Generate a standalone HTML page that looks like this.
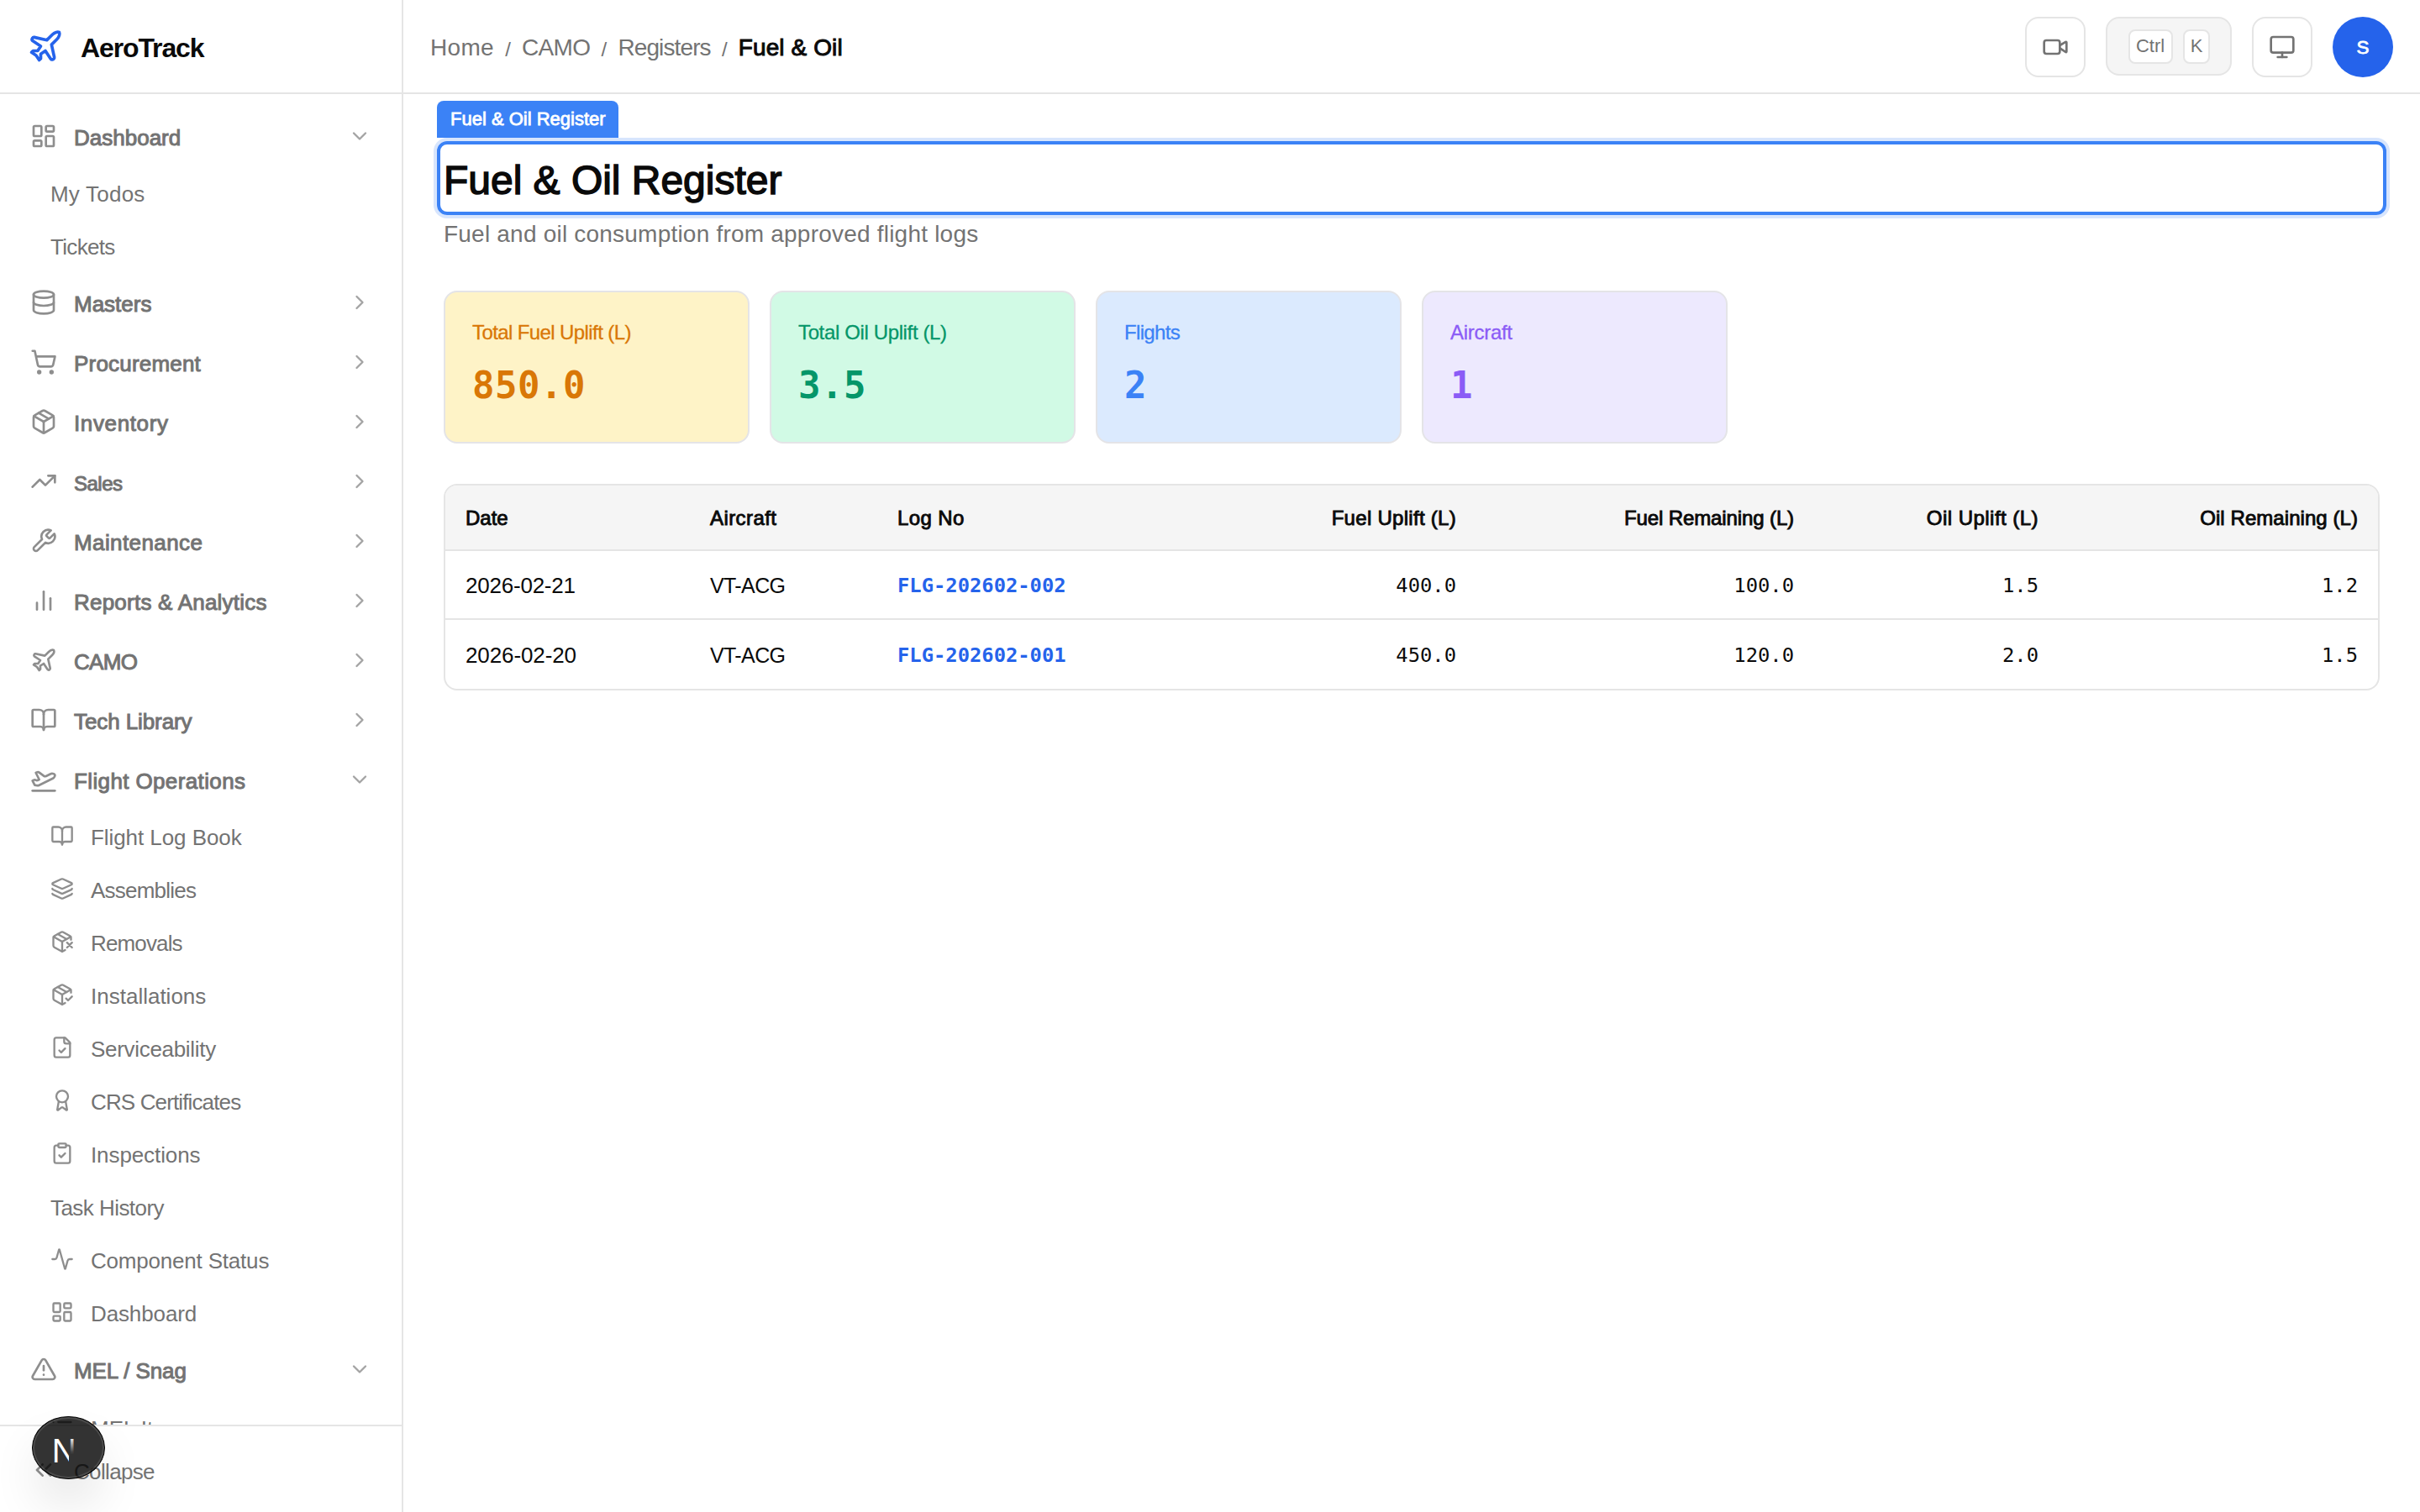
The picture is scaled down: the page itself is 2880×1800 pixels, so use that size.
<!DOCTYPE html>
<html lang="en"><head><meta charset="utf-8"><title>AeroTrack - Fuel &amp; Oil Register</title>
<style>
*{box-sizing:border-box;margin:0;padding:0}
html{zoom:2;background:#fff;overflow:hidden}
@media (max-width:1800px){html{zoom:1}}
body{width:1440px;height:900px;overflow:hidden;position:relative;background:#fff;color:#0a0a0a;font-family:"Liberation Sans",sans-serif;font-size:14px}
.ic{display:block;flex:none}
.tx{display:inline-block;white-space:nowrap}
.mono{font-family:"DejaVu Sans Mono","Liberation Mono",monospace}
.sb6{-webkit-text-stroke-width:.3px}
/* sidebar */
#sb{position:absolute;left:0;top:0;width:240px;height:900px;border-right:1px solid #e5e5e5;background:#fff}
#brand{position:absolute;left:0;top:0;width:239px;height:56px;border-bottom:1px solid #e5e5e5}
#brand .ic{position:absolute;left:16px;top:16.5px;color:#2563eb}
#brand .bt{position:absolute;left:48px;top:17.5px;font-size:16px;line-height:22px;font-weight:700;color:#0a0a0a;white-space:nowrap}
#nav{position:absolute;left:0;top:56px;width:239px;height:792px;padding:8px;overflow:hidden}
.ni{display:flex;align-items:center;color:#737373;font-size:13px;line-height:19.5px;white-space:nowrap;margin-bottom:2px}
.ni .lb{padding-top:3.1px}
.ni.top{height:33.5px;padding:0 10px;gap:10px;-webkit-text-stroke-width:.5px}
.ni.top .lb{flex:1}
.ni .ic{opacity:.8}
.ni .chev{color:#a3a3a3;opacity:1}
.subs{margin-left:12px;padding:.25px 0}
.subs.last{padding-top:1.5px}
.ni.sub{height:29.5px;padding:0 10px;gap:10px}
.ni.sub .lb{padding-top:2.4px}
#sbfoot{position:absolute;left:0;top:848px;width:239px;height:52px;border-top:1px solid #e5e5e5;background:#fff}
#sbfoot .ni{position:absolute;left:8px;top:9px;height:34px;padding:0 10px;gap:10px}
#sbfoot .tx{padding-top:2.4px}
/* header */
#hd{position:absolute;left:240px;top:0;width:1200px;height:56px;border-bottom:1px solid #e5e5e5;background:#fff}
#bc{position:absolute;left:16px;top:1px;height:55px;display:flex;align-items:center;font-size:14px;color:#737373;white-space:nowrap}
#bc .sl{font-size:12px;margin:0 6px;color:#737373;display:block;width:4.5px;text-align:center;position:relative;top:.8px}
#bc .cur{color:#0a0a0a;font-weight:400;-webkit-text-stroke-width:.5px}
.hb{position:absolute;top:10px;width:36px;height:36px;border:1px solid #e5e5e5;border-radius:8px;background:#fff;color:#737373;display:flex;align-items:center;justify-content:center}
#kb{position:absolute;top:10px;left:1013px;width:75px;height:35px;border:1px solid #e5e5e5;border-radius:8px;background:#f5f5f5}
#kb kbd{position:absolute;top:6.25px;height:20.5px;border:1px solid #e5e5e5;border-radius:4px;background:#fff;color:#737373;font:11px/17.9px "Liberation Sans",sans-serif;text-align:center}
#av{position:absolute;top:10px;left:1148px;width:36px;height:36px;border-radius:50%;background:#2563eb;color:#fff;font-weight:400;-webkit-text-stroke-width:.4px;font-size:11.2px;line-height:37.4px;text-align:center}
/* main */
#tab{position:absolute;left:260px;top:60px;width:108px;height:22px;background:#3b82f6;border-radius:4px 4px 0 0;color:#fff;font-size:11px;line-height:22.2px;padding-left:8px;white-space:nowrap;-webkit-text-stroke-width:.4px}
#hl{position:absolute;left:260px;top:84px;width:1160px;height:44px;border:2px solid #3b82f6;border-radius:6px;box-shadow:0 0 0 2px #d7e5fd}
#h1{position:absolute;left:264px;top:89.7px;font-size:24px;line-height:36px;font-weight:400;color:#0a0a0a;white-space:nowrap;-webkit-text-stroke-width:.75px}
#subt{position:absolute;left:264px;top:129.35px;font-size:14px;line-height:20px;color:#737373;white-space:nowrap}
.card{position:absolute;top:173px;width:182px;height:91px;border:1px solid #e4e4e7;border-radius:8px}
.card .cl{position:absolute;left:16px;top:16px;font-size:12px;line-height:16px;white-space:nowrap;-webkit-text-stroke-width:.15px}
.card .cv{position:absolute;left:16px;top:39.3px;font-size:22px;line-height:32px;font-weight:700;white-space:nowrap}
#tb{position:absolute;left:264px;top:288px;width:1152px;height:123px;border:1px solid #e5e5e5;border-radius:8px;overflow:hidden;background:#fff}
#tb table{width:1150px;table-layout:fixed;border-collapse:separate;border-spacing:0}
#tb th,#tb td{padding:0 12px;text-align:left;vertical-align:middle;white-space:nowrap;font-weight:400;overflow:visible}
#tb th{height:39px;background:#f5f5f5;border-bottom:1px solid #e5e5e5;font-size:12px;line-height:18px;-webkit-text-stroke-width:.45px}
#tb td{font-size:13px;line-height:19.5px}
#tb td.mono{font-size:11.9px}
#tb .r1 td{height:41px;border-bottom:1px solid #e5e5e5}
#tb .r2 td{height:41px}
#tb .num{text-align:right}
#tb td.lk{color:#2563eb;font-weight:700}
#tb th .tx{position:relative;top:.5px}
#tb .r1 .tx{position:relative;top:.5px}
#tb .r2 .tx{position:relative;top:.8px}
#nx{position:absolute;left:19.1px;top:842.8px;width:43.6px;height:37.9px;border-radius:50%;background:rgba(0,0,0,.8);border:.8px solid #000;box-shadow:inset 0 0 0 1px rgba(255,255,255,.12),0 16px 32px -8px rgba(0,0,0,.24);color:#fff;font-size:20px;line-height:20px;overflow:hidden}
#nx b{position:absolute;left:11.3px;top:10.4px;font-weight:400;display:block}
#nx i{position:absolute;left:21.5px;top:12px;width:4px;height:17px;background:linear-gradient(to bottom,rgba(51,51,51,0) 0,rgba(51,51,51,.9) 50%,#333 60%);display:block}

</style></head>
<body>
<div id="sb">
 <div id="brand"><svg class="ic " width="22" height="22" viewBox="0 0 24 24" fill="none" stroke="currentColor" stroke-width="2" stroke-linecap="round" stroke-linejoin="round"><path d="M17.8 19.2 16 11l3.5-3.5C21 6 21.5 4 21 3c-1-.5-3 0-4.5 1.5L13 8 4.8 6.200c-.5-.1-.9.1-1.1.5l-.3.5c-.2.5-.1 1 .3 1.300L9 12l-2 3H4l-1 1 3 2 2 3 1-1v-3l3-2 3.500 5.300c.3.4.8.5 1.300.3l.5-.2c.4-.3.6-.7.5-1.200z"/></svg><div class="bt"><span class="tx" id="t_brand" style="letter-spacing:-0.561px">AeroTrack</span></div></div>
 <div id="nav">
<div class="ni top"><svg class="ic " width="16" height="16" viewBox="0 0 24 24" fill="none" stroke="currentColor" stroke-width="2" stroke-linecap="round" stroke-linejoin="round"><rect width="7" height="9" x="3" y="3" rx="1"/><rect width="7" height="5" x="14" y="3" rx="1"/><rect width="7" height="9" x="14" y="12" rx="1"/><rect width="7" height="5" x="3" y="16" rx="1"/></svg><span class="lb tx" id="t_n_Dashboard" style="letter-spacing:0.001px">Dashboard</span><svg class="ic chev" width="14" height="14" viewBox="0 0 24 24" fill="none" stroke="currentColor" stroke-width="2" stroke-linecap="round" stroke-linejoin="round"><path d="m6 9 6 6 6-6"/></svg></div>
<div class="subs"><div class="ni sub"><span class="lb tx" id="t_s_My_Todos" style="letter-spacing:0.108px">My Todos</span></div><div class="ni sub"><span class="lb tx" id="t_s_Tickets" style="letter-spacing:-0.334px">Tickets</span></div></div>
<div class="ni top"><svg class="ic " width="16" height="16" viewBox="0 0 24 24" fill="none" stroke="currentColor" stroke-width="2" stroke-linecap="round" stroke-linejoin="round"><ellipse cx="12" cy="5" rx="9" ry="3"/><path d="M3 5V19A9 3 0 0 0 21 19V5"/><path d="M3 12A9 3 0 0 0 21 12"/></svg><span class="lb tx" id="t_n_Masters" style="letter-spacing:-0.001px">Masters</span><svg class="ic chev" width="14" height="14" viewBox="0 0 24 24" fill="none" stroke="currentColor" stroke-width="2" stroke-linecap="round" stroke-linejoin="round"><path d="m9 18 6-6-6-6"/></svg></div>
<div class="ni top"><svg class="ic " width="16" height="16" viewBox="0 0 24 24" fill="none" stroke="currentColor" stroke-width="2" stroke-linecap="round" stroke-linejoin="round"><circle cx="8" cy="21" r="1"/><circle cx="19" cy="21" r="1"/><path d="M2.050 2.050h2l2.660 12.420a2 2 0 0 0 2 1.580h9.780a2 2 0 0 0 1.950-1.570l1.650-7.430H5.120"/></svg><span class="lb tx" id="t_n_Procurement" style="letter-spacing:0.100px">Procurement</span><svg class="ic chev" width="14" height="14" viewBox="0 0 24 24" fill="none" stroke="currentColor" stroke-width="2" stroke-linecap="round" stroke-linejoin="round"><path d="m9 18 6-6-6-6"/></svg></div>
<div class="ni top"><svg class="ic " width="16" height="16" viewBox="0 0 24 24" fill="none" stroke="currentColor" stroke-width="2" stroke-linecap="round" stroke-linejoin="round"><path d="m7.500 4.270 9 5.150"/><path d="M21 8a2 2 0 0 0-1-1.730l-7-4a2 2 0 0 0-2 0l-7 4A2 2 0 0 0 3 8v8a2 2 0 0 0 1 1.730l7 4a2 2 0 0 0 2 0l7-4A2 2 0 0 0 21 16Z"/><path d="m3.300 7 8.700 5 8.700-5"/><path d="M12 22V12"/></svg><span class="lb tx" id="t_n_Inventory" style="letter-spacing:0.311px">Inventory</span><svg class="ic chev" width="14" height="14" viewBox="0 0 24 24" fill="none" stroke="currentColor" stroke-width="2" stroke-linecap="round" stroke-linejoin="round"><path d="m9 18 6-6-6-6"/></svg></div>
<div class="ni top"><svg class="ic " width="16" height="16" viewBox="0 0 24 24" fill="none" stroke="currentColor" stroke-width="2" stroke-linecap="round" stroke-linejoin="round"><polyline points="22 7 13.500 15.500 8.500 10.500 2 17"/><polyline points="16 7 22 7 22 13"/></svg><span class="lb tx" id="t_n_Sales" style="letter-spacing:-0.250px;font-size:12.0px">Sales</span><svg class="ic chev" width="14" height="14" viewBox="0 0 24 24" fill="none" stroke="currentColor" stroke-width="2" stroke-linecap="round" stroke-linejoin="round"><path d="m9 18 6-6-6-6"/></svg></div>
<div class="ni top"><svg class="ic " width="16" height="16" viewBox="0 0 24 24" fill="none" stroke="currentColor" stroke-width="2" stroke-linecap="round" stroke-linejoin="round"><path d="M14.700 6.300a1 1 0 0 0 0 1.400l1.600 1.600a1 1 0 0 0 1.400 0l3.770-3.770a6 6 0 0 1-7.940 7.940l-6.910 6.910a2.120 2.120 0 0 1-3-3l6.910-6.910a6 6 0 0 1 7.940-7.940l-3.760 3.760z"/></svg><span class="lb tx" id="t_n_Maintenance" style="letter-spacing:0.200px">Maintenance</span><svg class="ic chev" width="14" height="14" viewBox="0 0 24 24" fill="none" stroke="currentColor" stroke-width="2" stroke-linecap="round" stroke-linejoin="round"><path d="m9 18 6-6-6-6"/></svg></div>
<div class="ni top"><svg class="ic " width="16" height="16" viewBox="0 0 24 24" fill="none" stroke="currentColor" stroke-width="2" stroke-linecap="round" stroke-linejoin="round"><line x1="18" x2="18" y1="20" y2="10"/><line x1="12" x2="12" y1="20" y2="4"/><line x1="6" x2="6" y1="20" y2="14"/></svg><span class="lb tx" id="t_n_Reports___Analytics" style="letter-spacing:0.112px">Reports &amp; Analytics</span><svg class="ic chev" width="14" height="14" viewBox="0 0 24 24" fill="none" stroke="currentColor" stroke-width="2" stroke-linecap="round" stroke-linejoin="round"><path d="m9 18 6-6-6-6"/></svg></div>
<div class="ni top"><svg class="ic " width="16" height="16" viewBox="0 0 24 24" fill="none" stroke="currentColor" stroke-width="2" stroke-linecap="round" stroke-linejoin="round"><path d="M17.8 19.2 16 11l3.5-3.5C21 6 21.5 4 21 3c-1-.5-3 0-4.5 1.5L13 8 4.8 6.200c-.5-.1-.9.1-1.1.5l-.3.5c-.2.5-.1 1 .3 1.300L9 12l-2 3H4l-1 1 3 2 2 3 1-1v-3l3-2 3.500 5.300c.3.4.8.5 1.300.3l.5-.2c.4-.3.6-.7.5-1.200z"/></svg><span class="lb tx" id="t_n_CAMO" style="letter-spacing:-0.332px">CAMO</span><svg class="ic chev" width="14" height="14" viewBox="0 0 24 24" fill="none" stroke="currentColor" stroke-width="2" stroke-linecap="round" stroke-linejoin="round"><path d="m9 18 6-6-6-6"/></svg></div>
<div class="ni top"><svg class="ic " width="16" height="16" viewBox="0 0 24 24" fill="none" stroke="currentColor" stroke-width="2" stroke-linecap="round" stroke-linejoin="round"><path d="M12 7v14"/><path d="M3 18a1 1 0 0 1-1-1V4a1 1 0 0 1 1-1h5a4 4 0 0 1 4 4 4 4 0 0 1 4-4h5a1 1 0 0 1 1 1v13a1 1 0 0 1-1 1h-6a3 3 0 0 0-3 3 3 3 0 0 0-3-3z"/></svg><span class="lb tx" id="t_n_Tech_Library" style="letter-spacing:-0.046px">Tech Library</span><svg class="ic chev" width="14" height="14" viewBox="0 0 24 24" fill="none" stroke="currentColor" stroke-width="2" stroke-linecap="round" stroke-linejoin="round"><path d="m9 18 6-6-6-6"/></svg></div>
<div class="ni top"><svg class="ic " width="16" height="16" viewBox="0 0 24 24" fill="none" stroke="currentColor" stroke-width="2" stroke-linecap="round" stroke-linejoin="round"><path d="M2 22h20"/><path d="M6.360 17.400 4 17l-2-4 1.100-.550a2 2 0 0 1 1.800 0l.170.100a2 2 0 0 0 1.800 0L8 12 5 6l.900-.450a2 2 0 0 1 2.090.200l4.020 3a2 2 0 0 0 2.100.200l4.190-2.060a2.410 2.410 0 0 1 1.730-.170L21 7a1.400 1.400 0 0 1 .870 1.990l-.380.760c-.230.460-.600.840-1.070 1.080L7.580 17.200a2 2 0 0 1-1.220.180Z"/></svg><span class="lb tx" id="t_n_Flight_Operations" style="letter-spacing:0.188px">Flight Operations</span><svg class="ic chev" width="14" height="14" viewBox="0 0 24 24" fill="none" stroke="currentColor" stroke-width="2" stroke-linecap="round" stroke-linejoin="round"><path d="m6 9 6 6 6-6"/></svg></div>
<div class="subs"><div class="ni sub"><svg class="ic " width="14" height="14" viewBox="0 0 24 24" fill="none" stroke="currentColor" stroke-width="2" stroke-linecap="round" stroke-linejoin="round"><path d="M12 7v14"/><path d="M3 18a1 1 0 0 1-1-1V4a1 1 0 0 1 1-1h5a4 4 0 0 1 4 4 4 4 0 0 1 4-4h5a1 1 0 0 1 1 1v13a1 1 0 0 1-1 1h-6a3 3 0 0 0-3 3 3 3 0 0 0-3-3z"/></svg><span class="lb tx" id="t_s_Flight_Log_Book" style="letter-spacing:-0.035px">Flight Log Book</span></div><div class="ni sub"><svg class="ic " width="14" height="14" viewBox="0 0 24 24" fill="none" stroke="currentColor" stroke-width="2" stroke-linecap="round" stroke-linejoin="round"><path d="M12.830 2.180a2 2 0 0 0-1.660 0L2.600 6.080a1 1 0 0 0 0 1.830l8.580 3.910a2 2 0 0 0 1.660 0l8.580-3.900a1 1 0 0 0 0-1.830z"/><path d="M2 12a1 1 0 0 0 .580.910l8.600 3.910a2 2 0 0 0 1.650 0l8.580-3.900A1 1 0 0 0 22 12"/><path d="M2 17a1 1 0 0 0 .580.910l8.600 3.910a2 2 0 0 0 1.650 0l8.580-3.900A1 1 0 0 0 22 17"/></svg><span class="lb tx" id="t_s_Assemblies" style="letter-spacing:-0.389px">Assemblies</span></div><div class="ni sub"><svg class="ic " width="14" height="14" viewBox="0 0 24 24" fill="none" stroke="currentColor" stroke-width="2" stroke-linecap="round" stroke-linejoin="round"><path d="M21 10V8a2 2 0 0 0-1-1.730l-7-4a2 2 0 0 0-2 0l-7 4A2 2 0 0 0 3 8v8a2 2 0 0 0 1 1.730l7 4a2 2 0 0 0 2 0l2-1.140"/><path d="m7.500 4.270 9 5.150"/><polyline points="3.290 7 12 12 20.710 7"/><line x1="12" x2="12" y1="22" y2="12"/><path d="m17 13 5 5m-5 0 5-5"/></svg><span class="lb tx" id="t_s_Removals" style="letter-spacing:-0.429px">Removals</span></div><div class="ni sub"><svg class="ic " width="14" height="14" viewBox="0 0 24 24" fill="none" stroke="currentColor" stroke-width="2" stroke-linecap="round" stroke-linejoin="round"><path d="m16 16 2 2 4-4"/><path d="M21 10V8a2 2 0 0 0-1-1.730l-7-4a2 2 0 0 0-2 0l-7 4A2 2 0 0 0 3 8v8a2 2 0 0 0 1 1.730l7 4a2 2 0 0 0 2 0l2-1.140"/><path d="m7.500 4.270 9 5.150"/><polyline points="3.290 7 12 12 20.710 7"/><line x1="12" x2="12" y1="22" y2="12"/></svg><span class="lb tx" id="t_s_Installations" style="letter-spacing:0.001px">Installations</span></div><div class="ni sub"><svg class="ic " width="14" height="14" viewBox="0 0 24 24" fill="none" stroke="currentColor" stroke-width="2" stroke-linecap="round" stroke-linejoin="round"><path d="M15 2H6a2 2 0 0 0-2 2v16a2 2 0 0 0 2 2h12a2 2 0 0 0 2-2V7Z"/><path d="M14 2v4a2 2 0 0 0 2 2h4"/><path d="m9 15 2 2 4-4"/></svg><span class="lb tx" id="t_s_Serviceability" style="letter-spacing:-0.153px">Serviceability</span></div><div class="ni sub"><svg class="ic " width="14" height="14" viewBox="0 0 24 24" fill="none" stroke="currentColor" stroke-width="2" stroke-linecap="round" stroke-linejoin="round"><path d="m15.477 12.890 1.515 8.526a.5.5 0 0 1-.810.470l-3.580-2.687a1 1 0 0 0-1.197 0l-3.586 2.686a.5.5 0 0 1-.810-.469l1.514-8.526"/><circle cx="12" cy="8" r="6"/></svg><span class="lb tx" id="t_s_CRS_Certificates" style="letter-spacing:-0.433px">CRS Certificates</span></div><div class="ni sub"><svg class="ic " width="14" height="14" viewBox="0 0 24 24" fill="none" stroke="currentColor" stroke-width="2" stroke-linecap="round" stroke-linejoin="round"><rect width="8" height="4" x="8" y="2" rx="1" ry="1"/><path d="M16 4h2a2 2 0 0 1 2 2v14a2 2 0 0 1-2 2H6a2 2 0 0 1-2-2V6a2 2 0 0 1 2-2h2"/><path d="m9 14 2 2 4-4"/></svg><span class="lb tx" id="t_s_Inspections" style="letter-spacing:-0.050px">Inspections</span></div><div class="ni sub"><span class="lb tx" id="t_s_Task_History" style="letter-spacing:-0.273px">Task History</span></div><div class="ni sub"><svg class="ic " width="14" height="14" viewBox="0 0 24 24" fill="none" stroke="currentColor" stroke-width="2" stroke-linecap="round" stroke-linejoin="round"><path d="M22 12h-2.480a2 2 0 0 0-1.930 1.460l-2.350 8.360a.250.250 0 0 1-.480 0L9.240 2.180a.250.250 0 0 0-.480 0l-2.350 8.360A2 2 0 0 1 4.490 12H2"/></svg><span class="lb tx" id="t_s_Component_Status" style="letter-spacing:-0.099px">Component Status</span></div><div class="ni sub"><svg class="ic " width="14" height="14" viewBox="0 0 24 24" fill="none" stroke="currentColor" stroke-width="2" stroke-linecap="round" stroke-linejoin="round"><rect width="7" height="9" x="3" y="3" rx="1"/><rect width="7" height="5" x="14" y="3" rx="1"/><rect width="7" height="9" x="14" y="12" rx="1"/><rect width="7" height="5" x="3" y="16" rx="1"/></svg><span class="lb tx" id="t_s_Dashboard" style="letter-spacing:-0.061px">Dashboard</span></div></div>
<div class="ni top"><svg class="ic " width="16" height="16" viewBox="0 0 24 24" fill="none" stroke="currentColor" stroke-width="2" stroke-linecap="round" stroke-linejoin="round"><path d="m21.730 18-8-14a2 2 0 0 0-3.480 0l-8 14A2 2 0 0 0 4 21h16a2 2 0 0 0 1.730-3"/><path d="M12 9v4"/><path d="M12 17h.01"/></svg><span class="lb tx" id="t_n_MEL___Snag" style="letter-spacing:-0.056px">MEL / Snag</span><svg class="ic chev" width="14" height="14" viewBox="0 0 24 24" fill="none" stroke="currentColor" stroke-width="2" stroke-linecap="round" stroke-linejoin="round"><path d="m6 9 6 6 6-6"/></svg></div>
<div class="subs last"><div class="ni sub"><svg class="ic " width="14" height="14" viewBox="0 0 24 24" fill="none" stroke="currentColor" stroke-width="2" stroke-linecap="round" stroke-linejoin="round"><path d="M3 12h.01"/><path d="M3 18h.01"/><path d="M3 6h.01"/><path d="M8 12h13"/><path d="M8 18h13"/><path d="M8 6h13"/></svg><span class="lb tx" id="t_s_MEL_Items">MEL Items</span></div></div>
 </div>
 <div id="sbfoot"><div class="ni"><svg class="ic " width="16" height="16" viewBox="0 0 24 24" fill="none" stroke="currentColor" stroke-width="2" stroke-linecap="round" stroke-linejoin="round"><path d="m11 17-5-5 5-5"/><path d="m18 17-5-5 5-5"/></svg><span class="tx" id="t_collapse" style="letter-spacing:-0.330px">Collapse</span></div></div>
</div>
<div id="hd">
 <div id="bc"><span class="tx" id="t_bc_Home" style="letter-spacing:0.166px">Home</span><span class="sl">/</span><span class="tx" id="t_bc_CAMO" style="letter-spacing:-0.333px">CAMO</span><span class="sl">/</span><span class="tx" id="t_bc_Registers" style="letter-spacing:-0.439px">Registers</span><span class="sl">/</span><b class="cur"><span class="tx" id="t_bc_cur" style="letter-spacing:0.055px">Fuel &amp; Oil</span></b></div>
 <div class="hb" style="left:965px"><svg class="ic " width="16" height="16" viewBox="0 0 24 24" fill="none" stroke="currentColor" stroke-width="2" stroke-linecap="round" stroke-linejoin="round"><path d="m16 13 5.223 3.482a.5.5 0 0 0 .777-.416V7.870a.5.5 0 0 0-.752-.432L16 10.500"/><rect x="2" y="6" width="14" height="12" rx="2"/></svg></div>
 <div id="kb"><kbd style="left:12.25px;width:26.5px"><span class="tx" id="t_kbd_Ctrl" style="letter-spacing:0.001px">Ctrl</span></kbd><kbd style="left:45.2px;width:15.75px"><span class="tx" id="t_kbd_K">K</span></kbd></div>
 <div class="hb" style="left:1100px"><svg class="ic " width="16" height="16" viewBox="0 0 24 24" fill="none" stroke="currentColor" stroke-width="2" stroke-linecap="round" stroke-linejoin="round"><rect width="20" height="14" x="2" y="3" rx="2"/><line x1="8" x2="16" y1="21" y2="21"/><line x1="12" x2="12" y1="17" y2="21"/></svg></div>
 <div id="av"><span class="tx" id="t_av">S</span></div>
</div>
<div id="tab"><span class="tx" id="t_tab">Fuel &amp; Oil Register</span></div>
<div id="hl"></div>
<h1 id="h1"><span class="tx" id="t_h1" style="letter-spacing:-0.012px">Fuel &amp; Oil Register</span></h1>
<p id="subt"><span class="tx" id="t_subt" style="letter-spacing:0.107px">Fuel and oil consumption from approved flight logs</span></p>
<div class="card" style="left:264px;background:#fef3c7;color:#d97706"><div class="cl"><span class="tx" id="t_c1_l" style="letter-spacing:-0.300px">Total Fuel Uplift (L)</span></div><div class="cv mono"><span class="tx" id="t_c1_v" style="letter-spacing:0.250px">850.0</span></div></div>
<div class="card" style="left:458px;background:#d1fae5;color:#059669"><div class="cl"><span class="tx" id="t_c2_l" style="letter-spacing:-0.183px">Total Oil Uplift (L)</span></div><div class="cv mono"><span class="tx" id="t_c2_v" style="letter-spacing:0.250px">3.5</span></div></div>
<div class="card" style="left:652px;background:#dbeafe;color:#3b82f6"><div class="cl"><span class="tx" id="t_c3_l" style="letter-spacing:-0.332px">Flights</span></div><div class="cv mono"><span class="tx" id="t_c3_v">2</span></div></div>
<div class="card" style="left:846px;background:#ede9fe;color:#8b5cf6"><div class="cl"><span class="tx" id="t_c4_l" style="letter-spacing:-0.143px">Aircraft</span></div><div class="cv mono"><span class="tx" id="t_c4_v">1</span></div></div>
<div id="tb"><table>
 <colgroup><col style="width:145.5px"><col style="width:111.5px"><col style="width:193px"><col style="width:163.5px"><col style="width:201px"><col style="width:145.5px"><col style="width:190px"></colgroup>
 <thead><tr><th><span class="tx" id="t_th_Date" style="letter-spacing:0.001px">Date</span></th><th><span class="tx" id="t_th_Aircraft" style="letter-spacing:0.214px">Aircraft</span></th><th><span class="tx" id="t_th_Log_No" style="letter-spacing:0.200px">Log No</span></th><th class="num"><span class="tx" id="t_th_Fuel_Uplift__L_" style="letter-spacing:0.143px">Fuel Uplift (L)</span></th><th class="num"><span class="tx" id="t_th_Fuel_Remaining__L_" style="letter-spacing:-0.058px">Fuel Remaining (L)</span></th><th class="num"><span class="tx" id="t_th_Oil_Uplift__L_" style="letter-spacing:0.231px">Oil Uplift (L)</span></th><th class="num"><span class="tx" id="t_th_Oil_Remaining__L_" style="letter-spacing:0.030px">Oil Remaining (L)</span></th></tr></thead>
 <tbody>
 <tr class="r1"><td><span class="tx" id="t_r1_date" style="letter-spacing:-0.111px">2026-02-21</span></td><td><span class="tx" id="t_r1_ac" style="letter-spacing:-0.300px;font-size:12.5px">VT-ACG</span></td><td class="mono lk"><span class="tx" id="t_r1_log" style="letter-spacing:0.001px">FLG-202602-002</span></td><td class="num mono"><span class="tx" id="t_r1_fu">400.0</span></td><td class="num mono"><span class="tx" id="t_r1_fr">100.0</span></td><td class="num mono"><span class="tx" id="t_r1_ou">1.5</span></td><td class="num mono"><span class="tx" id="t_r1_or">1.2</span></td></tr>
 <tr class="r2"><td><span class="tx" id="t_r2_date" style="letter-spacing:-0.056px">2026-02-20</span></td><td><span class="tx" id="t_r2_ac" style="letter-spacing:-0.300px;font-size:12.5px">VT-ACG</span></td><td class="mono lk"><span class="tx" id="t_r2_log" style="letter-spacing:0.001px">FLG-202602-001</span></td><td class="num mono"><span class="tx" id="t_r2_fu">450.0</span></td><td class="num mono"><span class="tx" id="t_r2_fr">120.0</span></td><td class="num mono"><span class="tx" id="t_r2_ou">2.0</span></td><td class="num mono"><span class="tx" id="t_r2_or">1.5</span></td></tr>
 </tbody>
</table></div>
<div id="nx"><b>N</b><i></i></div>

</body></html>
